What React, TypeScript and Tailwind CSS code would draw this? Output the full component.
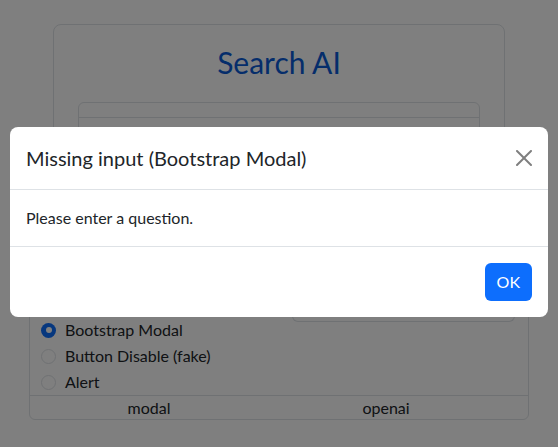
import React from 'react';

const FONT = "font-['Lato','Noto_Sans','Liberation_Sans',sans-serif]";

const methods = [
  { label: 'Bootstrap Modal', checked: true },
  { label: 'Button Disable (fake)', checked: false },
  { label: 'Alert', checked: false },
];

const Radio: React.FC<{ checked: boolean }> = ({ checked }) =>
  checked ? (
    <span className="flex h-[15px] w-[15px] items-center justify-center rounded-full bg-[#0d6efd]">
      <span className="h-[6px] w-[6px] rounded-full bg-white" />
    </span>
  ) : (
    <span className="h-[15px] w-[15px] rounded-full border border-[#dee2e6] bg-white" />
  );

const CloseIcon = () => (
  <svg width="16" height="16" viewBox="0 0 16 16" aria-hidden="true">
    <path
      fill="#000"
      fillOpacity="0.5"
      d="M.293.293a1 1 0 0 1 1.414 0L8 6.586 14.293.293a1 1 0 1 1 1.414 1.414L9.414 8l6.293 6.293a1 1 0 0 1-1.414 1.414L8 9.414l-6.293 6.293a1 1 0 0 1-1.414-1.414L6.586 8 .293 1.707a1 1 0 0 1 0-1.414z"
    />
  </svg>
);

export default function App() {
  return (
    <div className={`relative h-[447px] w-[558px] overflow-hidden bg-white text-[#212529] ${FONT}`}>
      {/* Page behind the modal */}
      <div className="pt-[24px]">
        <div className="mx-auto h-[252px] w-[452px] rounded-lg border border-[#dee2e6] px-[24px] pt-[19px]">
          <h1 className="text-center text-[30px] leading-[36px] text-[#0a5bd6]">Search AI</h1>
          <div className="mt-[22px] h-[160px] rounded-md border border-[#dee2e6]">
            <div className="h-[15px] border-b border-[#dee2e6]" />
          </div>
        </div>

        <div className="mx-auto w-[500px] rounded-md border border-[#dee2e6]">
          <div className="flex h-[118px] items-start">
            <div className="pl-[11px] pt-[40px]">
              {methods.map((m) => (
                <label key={m.label} className="flex h-[26px] items-center gap-[9px] text-[16px] leading-[24px]">
                  <Radio checked={m.checked} />
                  <span>{m.label}</span>
                </label>
              ))}
            </div>
            <div className="ml-auto mr-[13px] h-[45px] w-[223px] rounded-b-md border border-t-0 border-[#dee2e6]" />
          </div>
          <div className="grid grid-cols-[238px_236px] border-t border-[#dee2e6] text-center text-[16px] leading-[23px]">
            <span>modal</span>
            <span>openai</span>
          </div>
        </div>
      </div>

      {/* Backdrop + modal */}
      <div className="fixed inset-0 flex items-start bg-black/50 pt-[127px]">
        <div className="mx-[10px] w-full rounded-lg bg-white">
          <div className="flex items-center justify-between border-b border-[#dee2e6] px-[16px] py-[16px]">
            <h5 className="text-[20px] leading-[30px]">Missing input (Bootstrap Modal)</h5>
            <button className="flex h-[24px] w-[24px] items-center justify-center -mr-[4px]">
              <CloseIcon />
            </button>
          </div>
          <div className="p-[16px] text-[16px] leading-[24px]">Please enter a question.</div>
          <div className="flex justify-end border-t border-[#dee2e6] p-[12px]">
            <button className="m-[4px] rounded-md bg-[#0d6efd] px-[12px] py-[7px] text-[16px] leading-[24px] text-white">
              OK
            </button>
          </div>
        </div>
      </div>
    </div>
  );
}
